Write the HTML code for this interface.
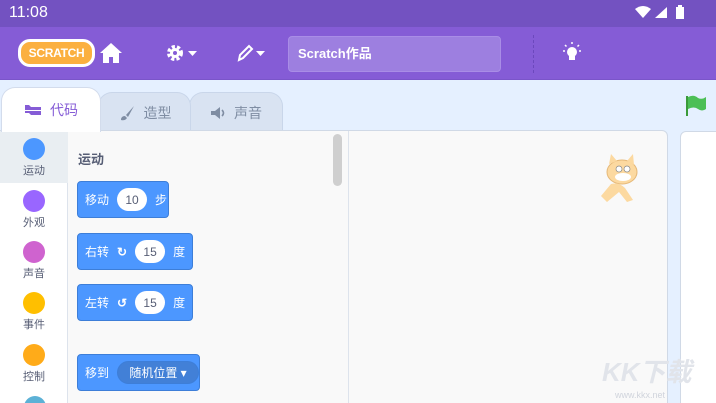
<!DOCTYPE html><html><head><meta charset="utf-8"><style>
*{margin:0;padding:0;box-sizing:border-box}
html,body{width:716px;height:403px;overflow:hidden}
body{background:#e5f0ff;font-family:"Liberation Sans","Noto Sans CJK SC",sans-serif;position:relative}
.abs{position:absolute}
.sb{left:0;top:0;width:716px;height:27px;background:#7352c1;color:#fff;font-size:16px}
.hd{left:0;top:27px;width:716px;height:53px;background:#855cd6;border-bottom:1px solid #7a55c9}
.tab{top:92px;height:40px;border:1px solid #c9d6ea;border-bottom:none;border-radius:14px 14px 0 0;background:#d9e3f2;color:#7f8da3;font-size:14px;display:flex;align-items:center;justify-content:center;gap:8px}
.blk{background:#4c97ff;border:1px solid #3d7ed8;border-radius:4px;color:#fff;font-size:12px;display:flex;align-items:center;padding-left:7px;height:37px;white-space:nowrap}
.pill{background:#fff;color:#575e75;border-radius:14px;height:23px;display:flex;align-items:center;justify-content:center;margin:0 8px;font-size:12px;flex:none}
.cat{left:0;width:68px;text-align:center;font-size:11px;color:#575e75}
.cat i{display:block;width:22px;height:22px;border-radius:50%;margin:0 auto 2px}
</style></head><body>
<div class="abs sb"><span class="abs" style="left:9px;top:4px">11:08</span>
<svg class="abs" style="left:633px;top:5px" width="56" height="16"><path d="M2 4 Q10 -2 18 4 L10 13Z" fill="#fff"/><path d="M22 13 L34 13 L34 2Z" fill="#fff"/><rect x="43" y="2" width="8" height="12" fill="#fff"/><rect x="45" y="0" width="4" height="2" fill="#fff"/></svg></div>
<div class="abs hd">
<div class="abs" style="left:18px;top:12px;width:77px;height:28px;background:#fbb040;border:3px solid #fff;border-radius:12px;color:#fff;font:bold 12px 'Liberation Sans';text-align:center;line-height:22px;letter-spacing:-.3px">SCRATCH</div>
<svg class="abs" style="left:99px;top:15px" width="24" height="22"><path d="M12 1 L23 11 L20 11 L20 21 L14 21 L14 15 L10 15 L10 21 L4 21 L4 11 L1 11Z" fill="#fff"/></svg>
<svg class="abs" style="left:166px;top:17px" width="32" height="18"><circle cx="9" cy="9" r="6" fill="none" stroke="#fff" stroke-width="4" stroke-dasharray="3 2"/><circle cx="9" cy="9" r="5" fill="#fff"/><circle cx="9" cy="9" r="2" fill="#855cd6"/><path d="M22 7h9l-4.5 5z" fill="#fff"/></svg>
<svg class="abs" style="left:236px;top:17px" width="32" height="18"><path d="M3 16 L4 11 L13 2 L16 5 L7 14Z" fill="none" stroke="#fff" stroke-width="2"/><path d="M20 7h9l-4.5 5z" fill="#fff"/></svg>
<div class="abs" style="left:288px;top:9px;width:213px;height:36px;background:#9d7fe0;border:1px solid #a98de6;border-radius:4px;color:#fff;font-size:13px;font-weight:bold;line-height:34px;padding-left:9px">Scratch作品</div>
<div class="abs" style="left:533px;top:8px;height:38px;border-left:1px dashed #6c48bd"></div>
<svg class="abs" style="left:560px;top:14px" width="24" height="24"><circle cx="12" cy="11" r="5" fill="#fff"/><rect x="9" y="15" width="6" height="4" fill="#fff"/><path d="M12 1v2M3 10h2M19 10h2M5 4l1.5 1.5M19 4l-1.5 1.5" stroke="#fff" stroke-width="1.5"/></svg>
</div>
<div class="abs tab" style="left:189px;width:94px">
<svg width="16" height="14"><path d="M1 5h4l5-4v12l-5-4H1z" fill="#7f8da3"/><path d="M12 4 Q15 7 12 10" stroke="#7f8da3" stroke-width="1.6" fill="none"/></svg>声音</div>
<div class="abs tab" style="left:98px;width:93px">
<svg width="18" height="16"><path d="M16 1 L8 10 L10 12Z" fill="#7f8da3"/><path d="M7 11 Q3 11 3 15 Q7 16 9 13Z" fill="#7f8da3"/></svg>造型</div>
<div class="abs tab" style="left:1px;top:87px;width:100px;height:45px;background:#fff;color:#855cd6;border-color:#d3dcec;z-index:2">
<svg width="18" height="14"><path d="M1 2h4l2 2h10v3H1zM1 8h16v4H7l-2-2H1z" fill="#855cd6"/></svg>代码</div>
<svg class="abs" style="left:684px;top:94px" width="24" height="24"><path d="M3 2v20" stroke="#3a9a3a" stroke-width="2"/><path d="M4 3 Q10 0 14 4 Q18 6 22 3 L22 15 Q18 18 14 15 Q10 12 4 15Z" fill="#4cbf56"/></svg>
<div class="abs" style="left:0;top:130px;width:668px;height:280px;background:#f9f9f9;border:1px solid #d0d9e6;border-radius:0 6px 0 0"></div>
<div class="abs" style="left:0;top:131px;width:68px;height:272px;background:#fff;border-right:1px solid #dde3ec"></div>
<div class="abs" style="left:0;top:131px;width:68px;height:52px;background:#e9eef2"></div>
<div class="abs cat" style="top:138px"><i style="background:#4c97ff"></i>运动</div>
<div class="abs cat" style="top:190px"><i style="background:#9966ff"></i>外观</div>
<div class="abs cat" style="top:241px"><i style="background:#cf63cf"></i>声音</div>
<div class="abs cat" style="top:292px"><i style="background:#ffbf00"></i>事件</div>
<div class="abs cat" style="top:344px"><i style="background:#ffab19"></i>控制</div>
<div class="abs" style="left:24px;top:396px;width:22px;height:22px;border-radius:50%;background:#5cb1d6"></div>
<div class="abs" style="left:348px;top:131px;width:1px;height:272px;background:#dde3ec"></div>
<div class="abs" style="left:333px;top:134px;width:9px;height:52px;border-radius:5px;background:#cfcfcf"></div>
<div class="abs" style="left:78px;top:149px;font-size:13px;font-weight:bold;color:#575e75">运动</div>
<div class="abs blk" style="left:77px;top:181px;width:92px">移动<div class="pill" style="width:30px">10</div>步</div>
<div class="abs blk" style="left:77px;top:233px;width:116px">右转<span style="margin-left:8px;font-weight:bold">↻</span><div class="pill" style="width:30px">15</div>度</div>
<div class="abs blk" style="left:77px;top:284px;width:116px">左转<span style="margin-left:8px;font-weight:bold">↺</span><div class="pill" style="width:30px">15</div>度</div>
<div class="abs blk" style="left:77px;top:354px;width:123px">移到<div class="pill" style="width:82px;background:#4280d7;color:#fff;border:1px solid #3d7ed8">随机位置 ▾</div></div>
<svg class="abs" style="left:595px;top:152px" width="45" height="55"><ellipse cx="27" cy="20" rx="15" ry="12" fill="#fcd9a0" stroke="#e5b878"/><path d="M14 12 L16 2 L22 9Z M32 9 L38 2 L39 13Z" fill="#fcd9a0"/><circle cx="24" cy="17" r="3" fill="#fff" stroke="#888" stroke-width=".7"/><circle cx="32" cy="17" r="3" fill="#fff" stroke="#888" stroke-width=".7"/><ellipse cx="28" cy="25" rx="8" ry="4" fill="#fff"/><path d="M16 32 Q24 30 30 36 L38 48 L32 50 L24 40 L12 50 L6 44Z" fill="#fcd9a0"/></svg>
<div class="abs" style="left:680px;top:131px;width:40px;height:280px;background:#fff;border:1px solid #d0d9e6;border-radius:6px 0 0 0"></div>
<div class="abs" style="left:602px;top:352px;font-size:26px;font-weight:bold;color:#e1e4ea;font-style:italic">KK下载</div>
<div class="abs" style="left:615px;top:390px;font-size:9px;color:#d0d4dc">www.kkx.net</div>
</body></html>
